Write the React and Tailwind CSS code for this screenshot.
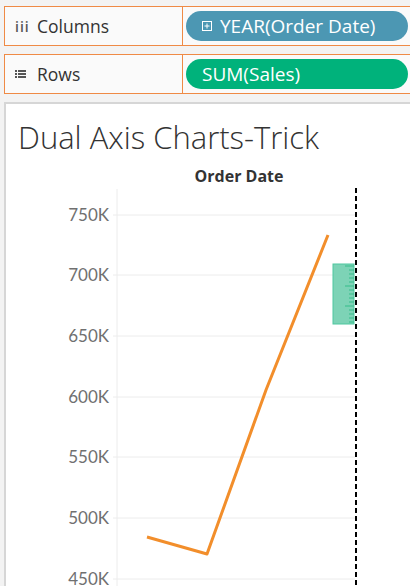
import React from 'react';

const ticks = [
  { label: '750K', y: 213 },
  { label: '700K', y: 273 },
  { label: '650K', y: 334 },
  { label: '600K', y: 395 },
  { label: '550K', y: 455 },
  { label: '500K', y: 516 },
  { label: '450K', y: 577 },
];

const rulerMarks = [264, 268, 272, 276, 280, 284, 288, 292, 296, 300, 304, 308, 312, 316, 320];

const Shelf = ({ icon, label, pill, pillColor, pillIcon }) => (
  <div className="flex h-[40px] w-[420px] border border-[#ef8a45] bg-[#fafafa]">
    <div className="flex w-[178px] items-center gap-[10px] border-r border-[#ef8a45] pl-[10px]">
      <span className="w-[12px] text-[14px] text-[#555]">{icon}</span>
      <span className="text-[17.5px] text-[#333]">{label}</span>
    </div>
    <div className="flex flex-1 items-center pl-[3px]">
      <div className={`flex h-[30px] w-[222px] items-center gap-[8px] rounded-full pl-[16px] text-[19px] text-white ${pillColor}`}>
        {pillIcon}
        <span>{pill}</span>
      </div>
    </div>
  </div>
);

const PlusBox = () => (
  <svg width="10" height="10" viewBox="0 0 10 10" className="shrink-0">
    <rect x="0.5" y="0.5" width="9" height="9" fill="none" stroke="white" strokeWidth="1" />
    <path d="M2.5 5h5M5 2.5v5" stroke="white" strokeWidth="1" />
  </svg>
);

const RowsIcon = () => (
  <svg width="12" height="10" viewBox="0 0 12 10">
    <rect x="0" y="1" width="2" height="2" fill="#555" />
    <rect x="0" y="4" width="2" height="2" fill="#555" />
    <rect x="0" y="7" width="2" height="2" fill="#555" />
    <rect x="3" y="1" width="8" height="2" fill="#555" />
    <rect x="3" y="4" width="8" height="2" fill="#555" />
    <rect x="3" y="7" width="8" height="2" fill="#555" />
  </svg>
);

export default function App() {
  return (
    <div className="h-[586px] w-[410px] overflow-hidden bg-[#f3f3f3] pl-[4px] pt-[6px]" style={{ fontFamily: '"Open Sans", "Liberation Sans", sans-serif' }}>
      <Shelf icon={<span className="font-semibold tracking-[1px]">iii</span>} label="Columns" pill="YEAR(Order Date)" pillColor="bg-[#4c97b3]" pillIcon={<PlusBox />} />
      <div className="h-[8px]" />
      <Shelf icon={<RowsIcon />} label="Rows" pill="SUM(Sales)" pillColor="bg-[#00b27b]" />
      <div className="h-[8px]" />
      <div className="h-[500px] w-[420px] border-l-2 border-t-2 border-[#d6d6d6] bg-white">
        <div className="pl-[12px] pt-[13px] text-[31px] font-light leading-[40px] text-[#333]">Dual Axis Charts-Trick</div>
        <div className="flex h-[31px] w-[352px] items-end justify-center pl-[114px] text-[16px] font-bold text-[#333]">Order Date</div>
        <svg width="404" height="400" viewBox="6 186 404 400" className="block">
          <line x1="117" y1="187" x2="117" y2="586" stroke="#ececec" strokeWidth="1" />
          {ticks.map((t) => (
            <g key={t.label}>
              <line x1="113" y1={t.y} x2="355" y2={t.y} stroke="#ececec" strokeWidth="1" />
              <text x="109" y={t.y + 6} textAnchor="end" fontSize="17" fill="#707070" fontFamily="Lato, Open Sans, sans-serif">
                {t.label}
              </text>
            </g>
          ))}
          <polyline points="147,535 207,552 266,388 328,233" fill="none" stroke="#f28e2b" strokeWidth="3" strokeLinejoin="round" />
          <rect x="333" y="262" width="21" height="60" fill="#7dd3b6" stroke="#4fc79f" strokeWidth="1" />
          {rulerMarks.map((y, i) => (
            <line key={y} x1={i % 5 === 0 ? 345 : 349} y1={y} x2="354" y2={y} stroke="#36bd8a" strokeWidth="1" />
          ))}
          <line x1="356" y1="186" x2="356" y2="586" stroke="#000" strokeWidth="2" strokeDasharray="5 3" />
        </svg>
      </div>
    </div>
  );
}
